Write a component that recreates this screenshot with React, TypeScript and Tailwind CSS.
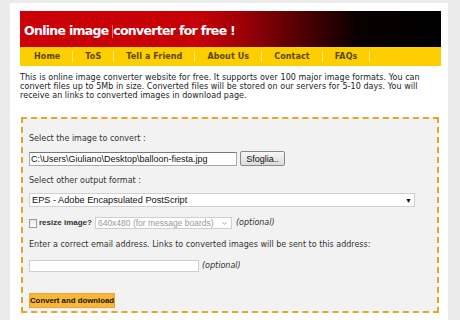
import { ChevronDown } from 'lucide-react'

const navItems = ['Home', 'ToS', 'Tell a Friend', 'About Us', 'Contact', 'FAQs']

export default function App() {
  return (
    <div className="w-[460px] h-[320px] overflow-hidden bg-[#ebebeb] pl-[10px] pr-[12px] pt-[3px] font-['DejaVu_Sans',sans-serif]">
      <div className="h-full bg-white pl-[10px] pr-[7px] pt-[8px]">
        {/* header */}
        <div className="h-[36px] flex items-center pl-[4px] pt-[4px] bg-[linear-gradient(to_right,#cc0008_0%,#c60008_42%,#a00006_52%,#4a0002_68%,#0a0000_80%,#000_100%)]">
          <h1 className="text-[12.5px] font-bold text-white leading-none tracking-[-0.7px] flex items-center whitespace-nowrap">
            Online image&nbsp;<span className="inline-block w-px h-[13px] bg-[#e88a8a] opacity-80" />converter for free !
          </h1>
        </div>

        {/* nav */}
        <div className="h-[19px] bg-[#fdcf00] flex items-center pl-[2px]">
          {navItems.map((item) => (
            <div key={item} className="flex items-center">
              <span className="px-[12px] text-[8px] font-bold text-[#5b4600] leading-none tracking-[0.1px]">{item}</span>
              <span className="w-px h-[11px] bg-[#ffe680]" />
            </div>
          ))}
        </div>

        <p className="mt-[7px] text-[8px] leading-[9px] text-[#222] pr-[4px] tracking-[0.05px]">
          This is online image converter website for free. It supports over 100 major image formats. You can
          convert files up to 5Mb in size. Converted files will be stored on our servers for 5-10 days. You will
          receive an links to converted images in download page.
        </p>

        {/* form */}
        <div className="mt-[17px] ml-px w-[418px] h-[196px] border-2 border-dashed border-[#e2a82a] bg-[#f2f2f2] px-[6px] pt-[15px] text-[8px] text-[#333] leading-[10px]">
          <div>Select the image to convert :</div>
          <div className="mt-[7px] flex items-center gap-[3px]">
            <div className="w-[208px] h-[14px] bg-white border border-[#a9a9a9] border-t-[#777] flex items-center px-[1px] text-[9px] text-[#111] font-['Liberation_Sans',sans-serif] overflow-hidden whitespace-nowrap">
              C:\Users\Giuliano\Desktop\balloon-fiesta.jpg
            </div>
            <div className="w-[45px] h-[15px] rounded-[2px] border border-[#8a8a8a] bg-[linear-gradient(#f6f6f6,#dcdcdc)] flex items-center justify-center text-[9px] text-[#111] font-['Liberation_Sans',sans-serif]">
              Sfoglia..
            </div>
          </div>

          <div className="mt-[10px]">Select other output format :</div>
          <div className="mt-[7px] w-[386px] h-[14px] bg-white border border-[#d0d0d0] flex items-center justify-between pl-[2px] pr-[2px] text-[9.2px] text-[#111] font-['Liberation_Sans',sans-serif]">
            <span>EPS - Adobe Encapsulated PostScript</span>
            <span className="text-[7px] leading-none">▼</span>
          </div>

          <div className="mt-[10px] h-[12px] flex items-center">
            <span className="w-[8px] h-[9px] border border-[#9a9a9a] bg-[linear-gradient(#e8e8e8,#fff)]" />
            <span className="ml-[2px] font-bold text-[#333] text-[8px] font-['Liberation_Sans',sans-serif] whitespace-nowrap">resize image?</span>
            <div className="ml-[3px] w-[137px] h-[12px] bg-white border border-[#cfcfcf] flex items-center justify-between pl-[2px] pr-[3px] text-[8.5px] text-[#9a9a9a] font-['Liberation_Sans',sans-serif] whitespace-nowrap">
              <span>640x480 (for message boards)</span>
              <ChevronDown className="w-[7px] h-[7px]" strokeWidth={3} />
            </div>
            <span className="ml-[4px] italic text-[#333]">(optional)</span>
          </div>

          <div className="mt-[11px]">Enter a correct email address. Links to converted images will be sent to this address:</div>
          <div className="mt-[10px] flex items-center">
            <div className="w-[170px] h-[12px] bg-white border border-[#cfcfcf]" />
            <span className="ml-[3px] italic text-[#333]">(optional)</span>
          </div>

          <div className="mt-[21px] w-[86px] h-[15px] bg-[#f7b73a] border border-[#e8a530] flex items-center justify-center font-bold text-[#1a1200] text-[7.8px] font-['Liberation_Sans',sans-serif] whitespace-nowrap">
            Convert and download
          </div>
        </div>
      </div>
    </div>
  )
}
